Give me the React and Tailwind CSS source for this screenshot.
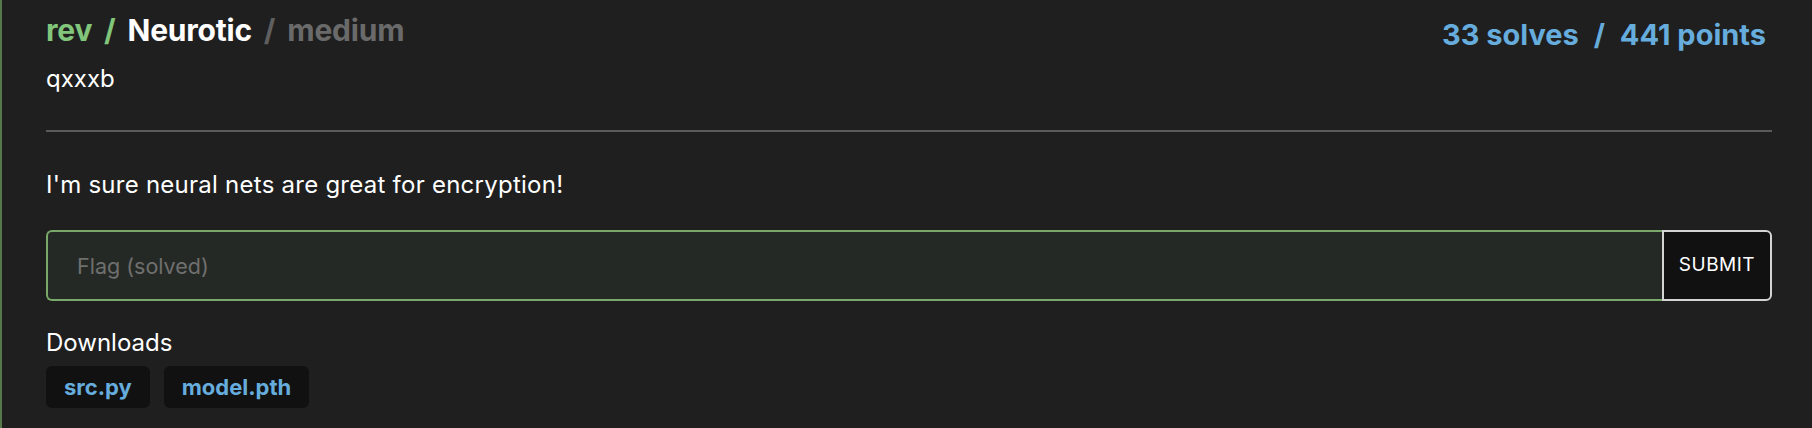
export default function App() {
  const font = { fontFamily: "Inter, 'Noto Sans', sans-serif" };
  return (
    <div className="min-h-[428px] w-full bg-[#1f1f1f]" style={font}>
      <div className="min-h-[428px] border-l-2 border-[#56784a] pl-[44px] pr-[40px] pt-[12px] pb-[20px]">
        <div className="flex items-start justify-between">
          <div>
            <div className="text-[30px] font-bold leading-[36px] tracking-[-0.2px]">
              <span className="text-[#82c67c]">rev</span>
              <span className="mx-[5px] text-[#82c67c]"> / </span>
              <span className="text-white">Neurotic</span>
              <span className="mx-[5px] text-[#5f5f5f]"> / </span>
              <span className="text-[#6a6a6a]">medium</span>
            </div>
            <div className="mt-[16px] text-[24px] leading-[30px] text-white">qxxxb</div>
          </div>
          <div className="mt-[5px] mr-[6px] text-[29px] font-bold leading-[36px] text-[#66acdc]">
            33 solves <span className="mx-[8px]">/</span> 441 points
          </div>
        </div>
        <div className="mt-[36px] h-[2px] w-full bg-[#5a5a5a]" />
        <p className="mt-[37px] text-[24px] leading-[32px] tracking-[0.25px] text-white">
          I'm sure neural nets are great for encryption!
        </p>
        <div className="mt-[29px] flex h-[71px]">
          <input
            className="h-full flex-1 rounded-l-[6px] border-2 border-r-0 border-[#78a86a] bg-[#252925] px-[29px] text-[21.5px] text-white placeholder-[#6f6f6f] outline-none"
            placeholder="Flag (solved)"
            style={font}
          />
          <button className="h-full w-[110px] rounded-r-[6px] border-2 border-[#d4d4d4] bg-[#111111] text-[19px] tracking-[0.5px] text-white">
            SUBMIT
          </button>
        </div>
        <div className="mt-[27px] text-[24px] leading-[30px] text-white">Downloads</div>
        <div className="mt-[8px] flex gap-[14px]">
          <div className="flex h-[42px] items-center rounded-[6px] bg-[#111111] px-[18px] text-[22px] font-bold text-[#66acdc]">
            src.py
          </div>
          <div className="flex h-[42px] items-center rounded-[6px] bg-[#111111] px-[18px] text-[22px] font-bold text-[#66acdc]">
            model.pth
          </div>
        </div>
      </div>
    </div>
  );
}
